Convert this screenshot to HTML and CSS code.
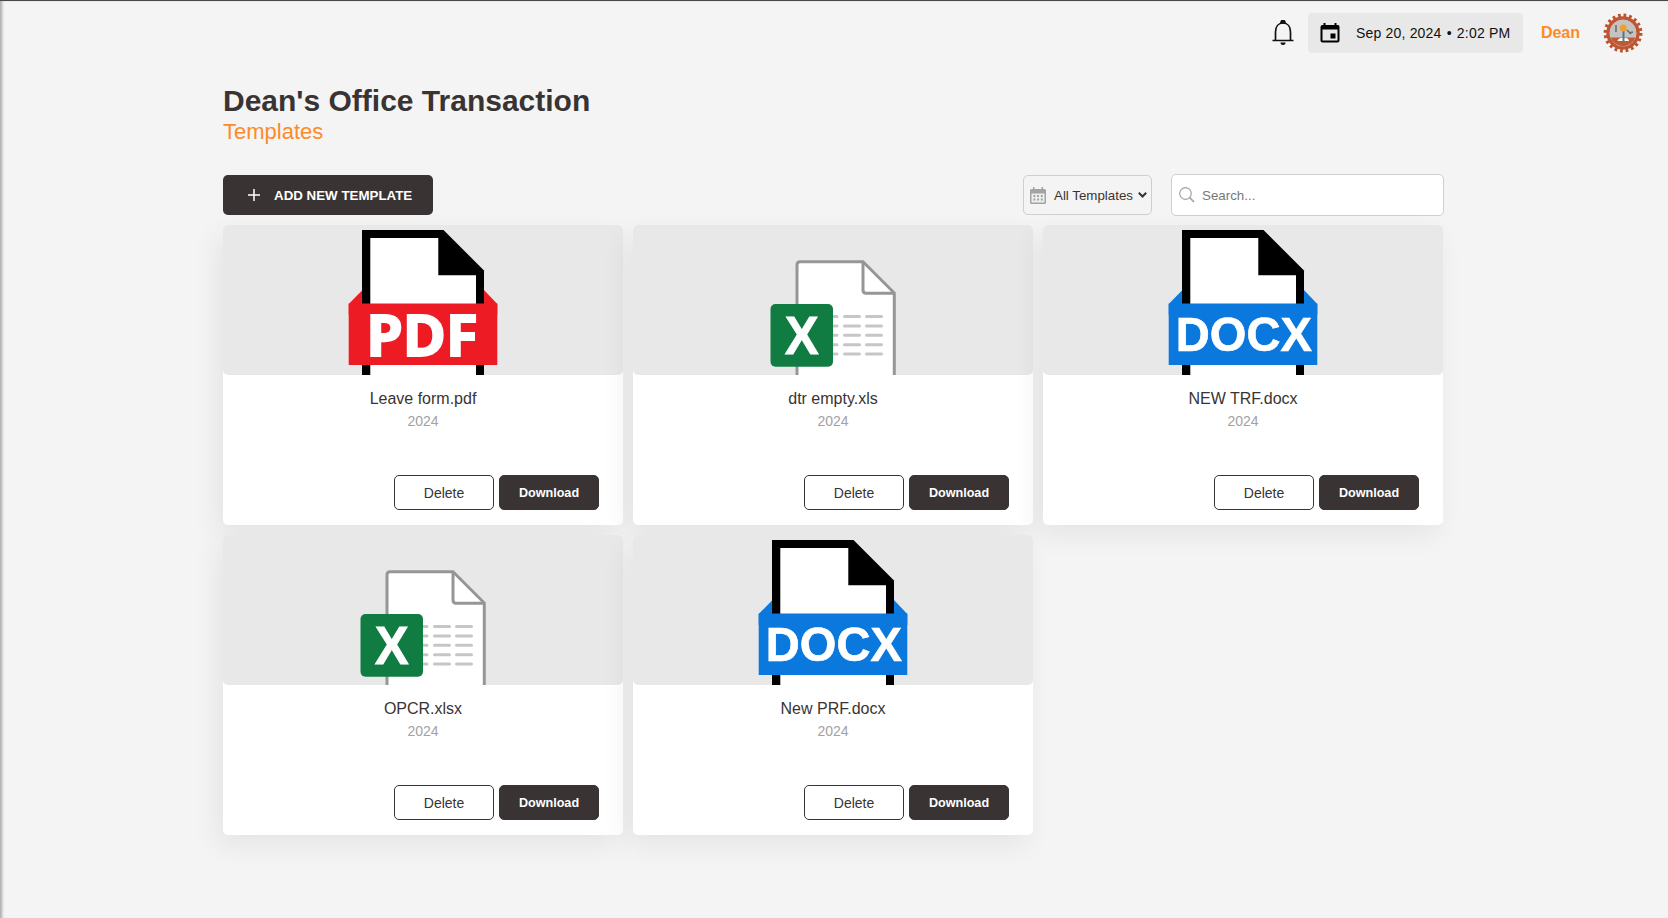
FILE: index.html
```html
<!DOCTYPE html>
<html lang="en">
<head>
<meta charset="utf-8">
<title>Dean's Office Transaction</title>
<link rel="stylesheet" href="styles.css">
</head>
<body>
<svg class="defs" width="0" height="0" aria-hidden="true">
  <defs>
    <symbol id="sheet" viewBox="0 0 150 150">
      <path d="M.7 79 L14.500 65 H136 L149.300 79 V90 H.7z"/>
      <path d="M14 5H95.500L136 45.500V150H14z" fill="#000"/>
      <path d="M22.300 13H90.300V50.300H128V150H22.300z" fill="#fff"/>
      <path d="M.7 78.500H149.300V140H.7z"/>
    </symbol>
    <symbol id="xls" viewBox="0 0 150 150">
      <path d="M39 150V40Q39 36.700 42 36.700H105L136.300 68V150" fill="#fff" stroke="#969696" stroke-width="3"/>
      <path d="M105 37V65Q105 68.200 108 68.200H136" fill="none" stroke="#969696" stroke-width="3" stroke-linejoin="round"/>
      <g stroke="#c6c6c6" stroke-width="3" stroke-linecap="round">
        <path d="M72 91.500h7M86.500 91.500h15M108.500 91.500h15M72 101h7M86.500 101h15M108.500 101h15M72 110.300h7M86.500 110.300h15M108.500 110.300h15M72 119.700h7M86.500 119.700h15M108.500 119.700h15M72 129h7M86.500 129h15M108.500 129h15"/>
      </g>
      <rect x="12.500" y="79" width="62.500" height="62.700" rx="5" fill="#107c41"/>
      <text x="26.800" y="129" class="xmark" textLength="34" lengthAdjust="spacingAndGlyphs">X</text>
    </symbol>
  </defs>
</svg>
<header class="topbar">
  <svg class="bell" viewBox="0 0 22 26" fill="none" stroke="#111" stroke-width="1.700">
    <path d="M.5 20.500H21.500M3.500 20.500V12C3.500 6.500 6.500 3 11 3s7.500 3.500 7.500 9v8.500"/>
    <path d="M9 2.600a2 2 0 0 1 4 0z" fill="#111"/>
    <path d="M8.500 22.500h5a2.500 2.500 0 0 1-5 0z" fill="#111" stroke="none"/>
  </svg>
  <div class="clock">
    <svg width="20" height="20" viewBox="0 0 20 20"><path fill-rule="evenodd" d="M3.500 0h2v2h9V0h2v2h1.300Q19.500 2 19.500 4V17.500Q19.500 19.500 17.500 19.500H2.500Q.5 19.500.5 17.500V4Q.5 2 2.500 2h1zM2.500 6.500V17.500h15V6.500zM10.500 10.500h5v5h-5z"/></svg>
    <span>Sep 20, 2024 <b>•</b> 2:02 PM</span>
  </div>
  <span class="user">Dean</span>
  <svg class="avatar" viewBox="0 0 40 40">
    <circle cx="20" cy="20" r="17.700" fill="none" stroke="#b9532f" stroke-width="3.500" stroke-dasharray="2.780 2.780"/>
    <circle cx="20" cy="20" r="15" fill="#d9d3cf" stroke="#c0552f" stroke-width="3.500"/>
    <circle cx="20" cy="20" r="13.300" fill="#c4c3c2"/>
    <path d="M7.500 24.500H32.500A13.300 13.300 0 0 1 7.500 24.500z" fill="#bd5c34"/>
    <path d="M13 12v7M24 17l4 4M26 20l4-1" stroke="#646b6d" stroke-width="1.500"/>
    <path d="M14.500 28q1-3 4-3h4q3 0 3.500 3z" fill="#fff"/>
    <path d="M20.500 18v10" stroke="#557789" stroke-width="2"/>
    <circle cx="20.300" cy="15" r="3.500" fill="#efa02c"/>
  </svg>
</header>
<main class="page">
  <h1>Dean's Office Transaction</h1>
  <p class="sub">Templates</p>
  <div class="toolbar">
    <button class="add"><svg width="12" height="12" viewBox="0 0 12 12"><path d="M6 0V12M0 6H12" stroke="#fff" stroke-width="1.500"/></svg>ADD NEW TEMPLATE</button>
    <div class="filter">
      <svg width="16" height="17" viewBox="0 0 16 17"><path fill="#a3a3a3" d="M3 0h1.500v2h7V0H13v2h1.500Q16 2 16 3.500V15.500Q16 17 14.500 17h-13Q0 17 0 15.500V3.500Q0 2 1.500 2H3z"/><path d="M1.500 6.500h13v9h-13z" fill="#eee"/><path d="M3.500 9h9.500M3.500 12.500h9.500" stroke="#999" stroke-width="2" stroke-dasharray="1.700 2"/></svg>
      <span>All Templates</span>
      <svg class="chev" width="9" height="6" viewBox="0 0 9 6"><path d="M.8 .8 4.500 4.500 8.200 .8" fill="none" stroke="#333" stroke-width="2"/></svg>
    </div>
    <div class="search">
      <svg width="16" height="16" viewBox="0 0 16 16" fill="none" stroke="#a3a3a3"><circle cx="6.500" cy="6.500" r="5.800" stroke-width="1.200"/><path d="M10.700 10.700 15 15" stroke-width="1.700"/></svg>
      <span>Search...</span>
    </div>
  </div>
  <section class="grid">
    <article class="card">
      <div class="thumb"><svg class="pdf" width="150" height="150"><use href="#sheet"/><text x="18.200" y="130.700" class="pdfmark" textLength="112" lengthAdjust="spacingAndGlyphs">PDF</text></svg></div>
      <h2>Leave form.pdf</h2><p>2024</p>
      <div class="actions"><button class="del">Delete</button><button class="down">Download</button></div>
    </article>
    <article class="card">
      <div class="thumb"><svg width="150" height="150"><use href="#xls"/></svg></div>
      <h2>dtr empty.xls</h2><p>2024</p>
      <div class="actions"><button class="del">Delete</button><button class="down">Download</button></div>
    </article>
    <article class="card">
      <div class="thumb"><svg class="docx" width="150" height="150"><use href="#sheet"/><text x="7.800" y="126" class="docmark" textLength="136" lengthAdjust="spacingAndGlyphs">DOCX</text></svg></div>
      <h2>NEW TRF.docx</h2><p>2024</p>
      <div class="actions"><button class="del">Delete</button><button class="down">Download</button></div>
    </article>
    <article class="card">
      <div class="thumb"><svg width="150" height="150"><use href="#xls"/></svg></div>
      <h2>OPCR.xlsx</h2><p>2024</p>
      <div class="actions"><button class="del">Delete</button><button class="down">Download</button></div>
    </article>
    <article class="card">
      <div class="thumb"><svg class="docx" width="150" height="150"><use href="#sheet"/><text x="7.800" y="126" class="docmark" textLength="136" lengthAdjust="spacingAndGlyphs">DOCX</text></svg></div>
      <h2>New PRF.docx</h2><p>2024</p>
      <div class="actions"><button class="del">Delete</button><button class="down">Download</button></div>
    </article>
  </section>
</main>
</body>
</html>
```
FILE: styles.css
```css
* { box-sizing: border-box; }
body {
  margin: 0;
  height: 919px;
  overflow: hidden;
  background: #f4f4f4;
  border-top: 1px solid #4a464a;
  box-shadow: inset 3px 0 3px -1px #aaa;
  font-family: "Liberation Sans", Arial, sans-serif;
  color: #393433;
}
.defs { display: block; }
h1, h2, p { margin: 0; font-weight: normal; }
button { font-family: inherit; }
.topbar { display: flex; justify-content: flex-end; align-items: center; height: 64px; padding-right: 25px; }
.bell { width: 22px; height: 26px; margin-right: 14px; }
.clock { display: flex; align-items: center; width: 215px; height: 40px; padding-left: 12px; background: #e8e8e8; border-radius: 4px; color: #111; font-size: 14px; white-space: nowrap; }
.clock span { margin-left: 16px; letter-spacing: .2px; }
.clock b { margin: 0 1px; font-size: 14px; font-weight: normal; }
.user { margin: 0 23px 0 18px; color: #ff8a24; font-weight: bold; font-size: 16px; }
.avatar { width: 40px; height: 40px; }
.page { width: 1221px; margin: 0 auto 0 223px; }
h1 { margin-top: 19px; font-size: 30px; line-height: 34px; font-weight: bold; }
.sub { margin-top: 1px; font-size: 22px; line-height: 26px; color: #fb8b2b; }
.toolbar { display: flex; align-items: center; height: 42px; margin: 29px 0 9px; }
.add { display: flex; align-items: center; gap: 14px; width: 210px; height: 40px; padding: 0 0 0 25px; border: 0; border-radius: 5px; background: #393433; color: #fff; font-weight: bold; font-size: 13.333px; }
.filter { display: flex; align-items: center; width: 129px; height: 40px; margin-left: auto; padding-left: 6px; border: 1px solid #cfcfcf; border-radius: 5px; font-size: 13.333px; white-space: nowrap; }
.filter span { margin: 0 5px 0 8px; }
.search { display: flex; align-items: center; gap: 7px; width: 273px; height: 42px; margin-left: 19px; padding-left: 7px; background: #fff; border: 1px solid #cfcfcf; border-radius: 5px; color: #777; font-size: 13.333px; }
.grid { display: grid; grid-template-columns: repeat(3, 400px); grid-auto-rows: 300px; gap: 10px; }
.card { display: flex; flex-direction: column; align-items: center; border-radius: 5px; background: #fff; box-shadow: -6px 10px 28px rgba(0, 0, 0, .065); }
.thumb { display: flex; justify-content: center; width: 100%; height: 150px; border-radius: 5px; background: #e8e8e8; }
.pdf { fill: #ed1c24; }
.docx { fill: #0b78de; }
.pdfmark { font: bold 58px "Noto Sans", sans-serif; fill: #fff; stroke: #fff; stroke-width: 1.8px; }
.docmark { font: bold 49px "Liberation Sans", Arial, sans-serif; fill: #fff; stroke: #fff; stroke-width: .7px; }
.xmark { font: bold 53px "Liberation Sans", Arial, sans-serif; fill: #fff; stroke: #fff; stroke-width: .8px; }
.card h2 { margin-top: 14px; font-size: 16px; line-height: 20px; }
.card p { margin-top: 3px; font-size: 14px; line-height: 18px; color: #a2a2a2; }
.actions { display: flex; align-self: stretch; justify-content: flex-end; gap: 5px; margin: auto 24px 15px 0; }
.actions button { width: 100px; height: 35px; padding: 0; border: 1px solid #393433; border-radius: 5px; }
.del { background: #fff; color: #393433; font-size: 14px; }
.actions .down { background: #393433; color: #fff; font-weight: bold; font-size: 12.600px; }
```
